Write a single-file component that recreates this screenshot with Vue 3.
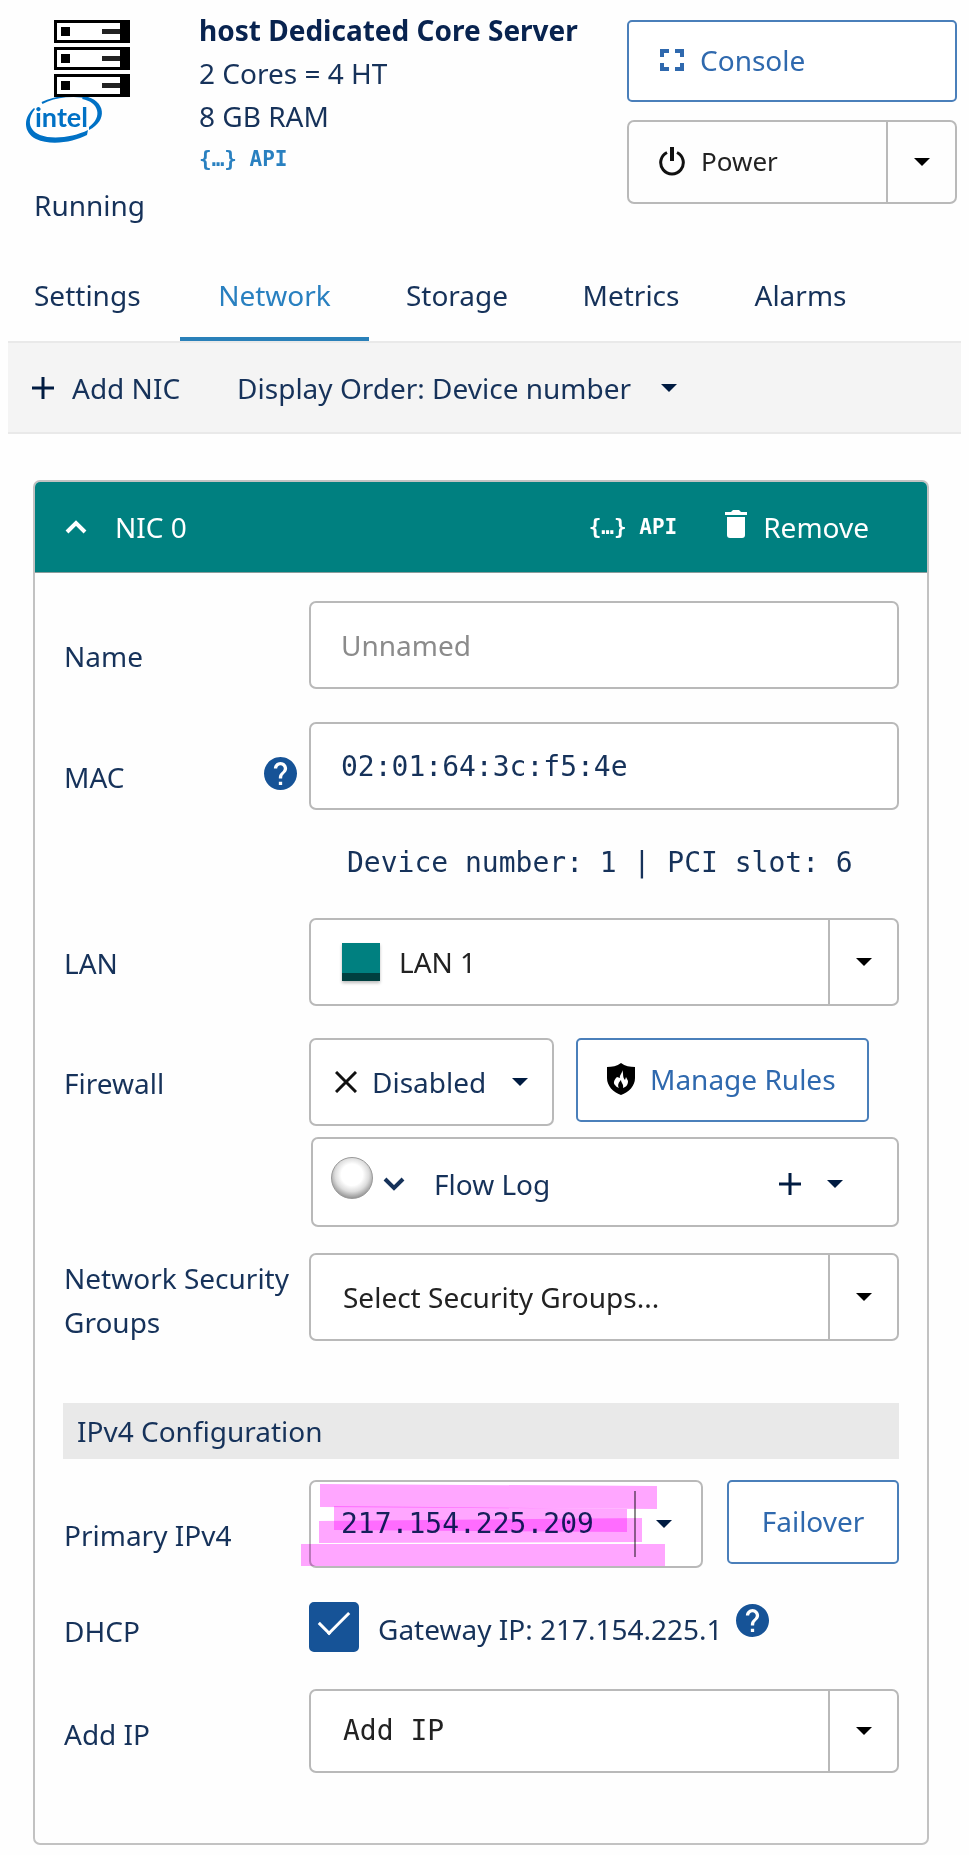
<script setup>
import { ref } from 'vue'

const tabs = ['Settings', 'Network', 'Storage', 'Metrics', 'Alarms']
const activeTab = ref('Network')
const nicName = ref('')
const mac = ref('02:01:64:3c:f5:4e')
const dhcp = ref(true)

const helpPath =
  'M12 2C6.48 2 2 6.48 2 12s4.48 10 10 10 10-4.48 10-10S17.52 2 12 2zm1 17h-2v-2h2v2zm2.07-7.75l-.9.92C13.45 12.9 13 13.5 13 15h-2v-.5c0-1.1.45-2.1 1.17-2.83l1.24-1.26c.37-.36.59-.86.59-1.41 0-1.1-.9-2-2-2s-2 .9-2 2H8c0-2.21 1.79-4 4-4s4 1.79 4 4c0 .88-.36 1.68-.93 2.25z'
</script>

<template>
  <main class="page">
    <header class="server">
      <div class="identity">
        <svg class="logo" viewBox="0 0 104 123" role="img" aria-label="Intel server">
          <path
            d="M16 83C30 76 50 74 62 78"
            fill="none" stroke="#0071c5" stroke-width="2"
          />
          <path d="M58 76C80 80 82 101 63 110V107C77 97 73 82 56 79Z" fill="#0071c5" />
          <path
            d="M8 88C-3 98 -3 112 10 119C25 126 48 122 61 115L62 110C48 117 27 120 14 115C2 110 1 99 9 89Z"
            fill="#0071c5"
          />
          <text x="9" y="107" class="logo-text">intel</text>
          <g v-for="n in 3" :key="n" :transform="`translate(28 ${(n - 1) * 27})`">
            <rect width="77" height="23" fill="#000" />
            <rect x="3" y="3" width="63" height="17" fill="#fff" />
            <rect x="7" y="7" width="9" height="9" fill="#000" />
            <rect x="48" y="9" width="18" height="5" fill="#222" />
          </g>
        </svg>
        <span class="status">Running</span>
      </div>

      <div class="specs">
        <strong>host Dedicated Core Server</strong>
        <span>2 Cores = 4 HT</span>
        <span>8 GB RAM</span>
        <a href="#api" class="api">{…} API</a>
      </div>

      <div class="actions">
        <button type="button" class="btn console">
          <svg class="ico24" viewBox="0 0 24 24" fill="none" stroke="currentColor" stroke-width="4">
            <path d="M2 9V3H9M15 3H22V9M22 15V21H15M9 21H2V15" />
          </svg>
          Console
        </button>
        <div class="split">
          <button type="button" class="split-main">
            <svg class="ico-power" viewBox="0 0 26 30" fill="none" stroke="#111" stroke-width="3">
              <path d="M8 6.5A11.3 11.3 0 1 0 18 6.5" />
              <path d="M13 1V15" stroke-width="4" />
            </svg>
            Power
          </button>
          <button type="button" class="split-arrow" aria-label="Power options">
            <svg class="caret black" viewBox="0 0 16 8"><path d="M0 0H16L8 8Z" /></svg>
          </button>
        </div>
      </div>
    </header>

    <nav class="tabs">
      <a
        v-for="tab in tabs"
        :key="tab"
        :href="'#' + tab.toLowerCase()"
        :class="{ active: tab === activeTab }"
        @click.prevent="activeTab = tab"
      >{{ tab }}</a>
    </nav>

    <div class="toolbar">
      <button type="button" class="plain add">
        <svg class="plus" viewBox="0 0 22 22"><path d="M11 0V22M0 11H22" /></svg>
        Add NIC
      </button>
      <button type="button" class="plain order">
        Display Order: Device number
        <svg class="caret" viewBox="0 0 16 8"><path d="M0 0H16L8 8Z" /></svg>
      </button>
    </div>

    <section class="card">
      <div class="card-head">
        <button type="button" class="plain toggle">
          <svg class="chevron" viewBox="0 0 22 14"><path d="M2 12L11 3L20 12" /></svg>
          NIC 0
        </button>
        <a href="#nic-api" class="api">{…} API</a>
        <button type="button" class="plain remove">
          <svg class="trash" viewBox="0 0 22 28" fill="#fff">
            <path d="M0 2H6L8 0H14L16 2H22V5H0Z" />
            <path d="M2 7H20V25Q20 28 17 28H5Q2 28 2 25Z" />
          </svg>
          Remove
        </button>
      </div>

      <div class="card-body">
        <div class="row name-row">
          <label for="nic-name" class="label low">Name</label>
          <input id="nic-name" v-model="nicName" class="box" type="text" placeholder="Unnamed" />
        </div>

        <div class="row mac-row">
          <div class="label low with-help">
            <label for="nic-mac">MAC</label>
            <svg class="help" viewBox="2 2 20 20" role="img" aria-label="MAC help"><path :d="helpPath" /></svg>
          </div>
          <input id="nic-mac" v-model="mac" class="box mono" type="text" />
        </div>
        <p class="device mono">Device number: 1 | PCI slot: 6</p>

        <div class="row lan-row">
          <label for="lan" class="label mid">LAN</label>
          <div class="box combo">
            <span class="swatch"></span>
            <select id="lan" class="lan"><option>LAN 1</option></select>
            <span class="arrow"><svg class="caret black" viewBox="0 0 16 8"><path d="M0 0H16L8 8Z" /></svg></span>
          </div>
        </div>

        <div class="row firewall-row">
          <label for="firewall" class="label mid">Firewall</label>
          <div class="stack">
            <div class="pair">
              <div class="box firewall">
                <svg class="cross" viewBox="0 0 22 22"><path d="M1 1L21 21M21 1L1 21" /></svg>
                <select id="firewall"><option>Disabled</option></select>
                <svg class="caret" viewBox="0 0 16 8"><path d="M0 0H16L8 8Z" /></svg>
              </div>
              <button type="button" class="btn rules">
                <svg class="shield" viewBox="0 0 28 32">
                  <path d="M14 0C18 3 23 4 28 4V15C28 23 22 29 14 32C6 29 0 23 0 15V4C5 4 10 3 14 0Z" />
                  <path
                    fill="#fff"
                    d="M15 7C16 10 12 12 13 15L10 14C7 17 6 20 8 22Q9 24 12 25C10 22 12 19 14 17C14 20 17 21 16 25C19 24 21 22 21 18L19 14L18 17C15 14 17 10 15 7Z"
                  />
                </svg>
                Manage Rules
              </button>
            </div>
            <div class="box flow">
              <span class="led"></span>
              <button type="button" class="plain flow-toggle">
                <svg class="chevron" viewBox="0 0 22 14"><path d="M2 2L11 11L20 2" /></svg>
                Flow Log
              </button>
              <button type="button" class="plain flow-add" aria-label="Add flow log">
                <svg class="plus" viewBox="0 0 22 22"><path d="M11 0V22M0 11H22" /></svg>
                <svg class="caret" viewBox="0 0 16 8"><path d="M0 0H16L8 8Z" /></svg>
              </button>
            </div>
          </div>
        </div>

        <div class="row">
          <label for="groups" class="label top">Network Security Groups</label>
          <div class="box combo">
            <select id="groups"><option>Select Security Groups...</option></select>
            <span class="arrow"><svg class="caret black" viewBox="0 0 16 8"><path d="M0 0H16L8 8Z" /></svg></span>
          </div>
        </div>

        <h2 class="section">IPv4 Configuration</h2>

        <div class="row primary-row">
          <label for="primary-ip" class="label low">Primary IPv4</label>
          <div class="box ip">
            <select id="primary-ip" class="mono"><option>217.154.225.209</option></select>
            <span class="divider"></span>
            <svg class="caret" viewBox="0 0 16 8"><path d="M0 0H16L8 8Z" /></svg>
            <svg class="marker" viewBox="0 0 364 83" aria-hidden="true">
              <path d="M19 0L356 2V25L19 23Z" />
              <path d="M33 22L326 25V48L33 46Z" />
              <path d="M18 37L341 34V58L18 59Z" />
              <path d="M0 60H364V82H0Z" />
            </svg>
          </div>
          <button type="button" class="btn failover">Failover</button>
        </div>

        <div class="row dhcp-row">
          <label for="dhcp" class="label">DHCP</label>
          <input id="dhcp" v-model="dhcp" type="checkbox" class="check" />
          <span class="gateway">Gateway IP: 217.154.225.1</span>
          <svg class="help" viewBox="2 2 20 20" role="img" aria-label="DHCP help"><path :d="helpPath" /></svg>
        </div>

        <div class="row">
          <label for="add-ip" class="label mid">Add IP</label>
          <div class="box combo short">
            <select id="add-ip" class="mono"><option>Add IP</option></select>
            <span class="arrow"><svg class="caret black" viewBox="0 0 16 8"><path d="M0 0H16L8 8Z" /></svg></span>
          </div>
        </div>
      </div>
    </section>
  </main>
</template>

<style>
body {
  background: #fefefe;
}
</style>

<style scoped>
.page {
  padding: 0 8px 8px;
  font: 28px/42px "Noto Sans", "Open Sans", sans-serif;
  color: #16325a;
}
.page * {
  box-sizing: border-box;
}
button, input, select {
  font: inherit;
  color: inherit;
  margin: 0;
}
button {
  cursor: pointer;
}
a {
  color: inherit;
  text-decoration: none;
}
svg {
  display: block;
  flex: none;
}
.mono {
  font-family: "DejaVu Sans Mono", monospace;
}

/* Server summary */
.server {
  display: grid;
  grid-template-columns: 173px 1fr 330px;
  padding: 9px 4px 0 18px;
}
.identity {
  display: flex;
  flex-direction: column;
  padding-top: 11px;
}
.logo {
  width: 104px;
  height: 123px;
}
.logo-text {
  font: 700 27px Lato, sans-serif;
  fill: #0071c5;
}
.status {
  margin: 41px 0 0 8px;
}
.specs {
  display: flex;
  flex-direction: column;
  line-height: 43px;
  white-space: nowrap;
}
.specs strong {
  color: #08234f;
}
.api {
  font: bold 21px/42px "DejaVu Sans Mono", monospace;
}
.specs .api {
  color: #2980c0;
}
.actions {
  display: flex;
  flex-direction: column;
  gap: 18px;
  padding-top: 11px;
}
.btn {
  display: flex;
  align-items: center;
  height: 84px;
  padding: 0 0 2px;
  background: #fff;
  border: 2px solid #4a7fba;
  border-radius: 5px;
  color: #2f69ae;
  white-space: nowrap;
}
.console {
  gap: 16px;
  height: 82px;
  padding-left: 31px;
}
.ico24 {
  width: 24px;
  height: 24px;
}
.split {
  display: flex;
  height: 84px;
  border: 2px solid #b9b9b9;
  border-radius: 7px;
}
.split button {
  display: flex;
  align-items: center;
  background: none;
  border: 0;
  padding: 0;
}
.split-main {
  flex: 1;
  gap: 16px;
  color: #222;
  font-size: 26px;
}
.split .split-main {
  padding: 0 0 2px 30px;
}
.split .split-arrow {
  width: 69px;
  justify-content: center;
  border-left: 2px solid #b9b9b9;
}
.ico-power {
  width: 26px;
  height: 30px;
}
.caret {
  width: 16px;
  height: 8px;
  fill: #001b41;
}
.black {
  fill: #000;
}

/* Tabs and toolbar */
.tabs {
  display: grid;
  grid-template-columns: 172px 189px 176px 172px 167px;
}
.tabs a {
  padding: 48px 0 21px;
  border-bottom: 4px solid transparent;
  text-align: center;
}
.tabs a:first-child {
  padding-left: 26px;
  text-align: left;
}
.tabs .active {
  color: #2980c0;
  border-color: #2980b9;
}
.toolbar {
  display: flex;
  align-items: center;
  gap: 57px;
  height: 93px;
  padding-left: 24px;
  background: #f4f4f4;
  border: solid #e9e9e9;
  border-width: 2px 0;
}
.plain {
  display: flex;
  align-items: center;
  padding: 0;
  background: none;
  border: 0;
  white-space: nowrap;
}
.add {
  gap: 18px;
}
.order {
  gap: 30px;
}
.plus {
  width: 22px;
  height: 22px;
  fill: none;
  stroke: #001b41;
  stroke-width: 3;
}
.chevron {
  width: 22px;
  height: 14px;
  fill: none;
  stroke: currentColor;
  stroke-width: 4;
}

/* NIC card */
.card {
  margin: 46px 32px 0 25px;
  border: 2px solid #c2c2c2;
  border-radius: 7px;
  overflow: hidden;
}
.card-head {
  display: flex;
  align-items: center;
  height: 91px;
  padding: 0 58px 0 30px;
  background: #008080;
  border-bottom: 1px solid #8a9c9c;
  color: #fff;
}
.toggle {
  gap: 28px;
  margin-right: auto;
}
.remove {
  gap: 16px;
  margin-left: 48px;
}
.trash {
  width: 22px;
  height: 28px;
  margin-bottom: 6px;
}
.card-body {
  padding: 28px 28px 70px;
}
.row {
  display: flex;
  align-items: flex-start;
}
.name-row {
  margin-bottom: 33px;
}
.mac-row {
  margin-bottom: 28px;
}
.lan-row {
  margin-bottom: 32px;
}
.firewall-row {
  margin-bottom: 26px;
}
.primary-row {
  margin-bottom: 34px;
}
.dhcp-row {
  margin-bottom: 36px;
}
.label {
  flex: none;
  width: 246px;
  padding: 7px 0 0 1px;
  line-height: 44px;
}
.top {
  padding-top: 3px;
}
.low {
  padding-top: 33px;
}
.mid {
  padding-top: 23px;
}
.with-help {
  display: flex;
  align-items: flex-start;
  justify-content: space-between;
  padding-right: 12px;
}
.help {
  width: 33px;
  height: 33px;
  margin-top: 2px;
  fill: #165397;
}
.box {
  flex: 1;
  min-width: 0;
  height: 88px;
  border: 2px solid #b9b9b9;
  border-radius: 7px;
  background: #fff;
}
.short {
  height: 84px;
}
input.box {
  padding: 0 30px;
}
input::placeholder {
  color: #8b8b8b;
  opacity: 1;
}
select {
  appearance: none;
  width: 100%;
  height: 100%;
  padding: 0;
  background: none;
  border: 0;
}
.device {
  margin: 0 0 30px;
  padding-left: 284px;
  line-height: 50px;
  white-space: nowrap;
}
.combo {
  display: grid;
  grid-template-columns: 32px 1fr 69px;
  align-items: center;
}
.combo select {
  grid-area: 1 / 1 / 2 / 4;
  padding-left: 32px;
  color: #222;
}
.combo .lan {
  padding-left: 88px;
}
.swatch {
  grid-area: 1 / 1;
  width: 38px;
  height: 38px;
  margin-left: 31px;
  background: #008080;
  border-bottom: 8px solid #004040;
  box-shadow: 0 2px 3px #0004;
}
.arrow {
  grid-area: 1 / 3;
  display: flex;
  align-items: center;
  justify-content: center;
  height: 100%;
  border-left: 2px solid #b9b9b9;
  pointer-events: none;
}
.stack {
  flex: 1;
  display: flex;
  flex-direction: column;
  gap: 11px;
}
.stack .box {
  flex: none;
}
.pair {
  display: flex;
  align-items: flex-start;
  gap: 22px;
}
.firewall {
  display: flex;
  align-items: center;
  gap: 15px;
  width: 245px;
  padding: 0 24px;
}
.cross {
  width: 22px;
  height: 22px;
  stroke: #111;
  stroke-width: 3;
}
.rules {
  gap: 15px;
  padding: 0 31px 2px 29px;
}
.shield {
  width: 28px;
  height: 32px;
}
.flow {
  display: flex;
  align-items: center;
  height: 90px;
  margin-left: 2px;
  padding: 4px 54px 0 18px;
}
.led {
  width: 42px;
  height: 42px;
  margin: 0 10px 12px 0;
  border-radius: 50%;
  border: 1px solid #999;
  background: radial-gradient(circle at 50% 42%, #fff 35%, #ddd 55%, #999 75%);
}
.flow-toggle {
  gap: 29px;
  margin-right: auto;
}
.flow-add {
  gap: 26px;
}
.section {
  margin: 59px 0 21px;
  padding-left: 14px;
  background: #e9e9e9;
  font: inherit;
  line-height: 56px;
}
.ip {
  position: relative;
  display: flex;
  align-items: center;
  padding: 0 29px 0 30px;
}
.divider {
  flex: none;
  width: 2px;
  height: 66px;
  margin-right: 20px;
  background: #8a8a8a;
}
.marker {
  position: absolute;
  left: -10px;
  top: 2px;
  width: 364px;
  height: 83px;
  mix-blend-mode: multiply;
  pointer-events: none;
}
.marker path {
  fill: #ffa6ff;
  mix-blend-mode: multiply;
}
.failover {
  justify-content: center;
  width: 172px;
  margin-left: 24px;
}
.check {
  appearance: none;
  display: grid;
  place-items: center;
  width: 50px;
  height: 50px;
  border-radius: 5px;
  border: 2px solid #165397;
}
.check:checked {
  background: #165397;
}
.check:checked::before {
  content: "";
  width: 27px;
  height: 13px;
  margin-bottom: 16px;
  border: solid #fff;
  border-width: 0 0 3px 3px;
  transform: rotate(-45deg);
}
.gateway {
  margin: 5px 13px 0 19px;
  line-height: 44px;
}
</style>
